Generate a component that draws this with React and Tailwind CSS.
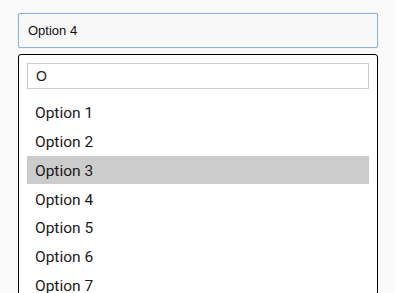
export default function App() {
  const opts = ["Option 1", "Option 2", "Option 3", "Option 4", "Option 5", "Option 6", "Option 7"];
  return (
    <div className="h-[293px] w-[395px] overflow-hidden bg-[#f9f9f9]" style={{ fontFamily: "Roboto, sans-serif" }}>
      <div className="pl-[18px] pt-[13px] w-[378px]">
        <div className="h-[35px] w-[360px] rounded-[2px] border border-[#8fb0e4] bg-[#f8f8f8] shadow-[0_0_1px_#a9c2ea] flex items-center pl-[9px] text-[13px] text-[#111]" style={{ fontFamily: '"Liberation Sans", Arial, sans-serif' }}>
          Option 4
        </div>
        <div className="mt-[6px] w-[360px] rounded-[3px] border border-black bg-white p-[8px]">
          <div className="h-[26px] w-[342px] border border-[#cccccc] bg-white flex items-center pl-[8px] text-[14px] text-[#222]" style={{ fontFamily: '"Liberation Sans", Arial, sans-serif' }}>
            O
          </div>
          <div className="mt-[9px] flex flex-col">
            {opts.map((o) => (
              <div key={o} className={`h-[28.8px] flex items-center pl-[8px] pt-[3px] text-[15.5px] text-[#1a1a1a] ${o === "Option 3" ? "bg-[#cccccc]" : ""}`}>
                {o}
              </div>
            ))}
          </div>
        </div>
      </div>
    </div>
  );
}
